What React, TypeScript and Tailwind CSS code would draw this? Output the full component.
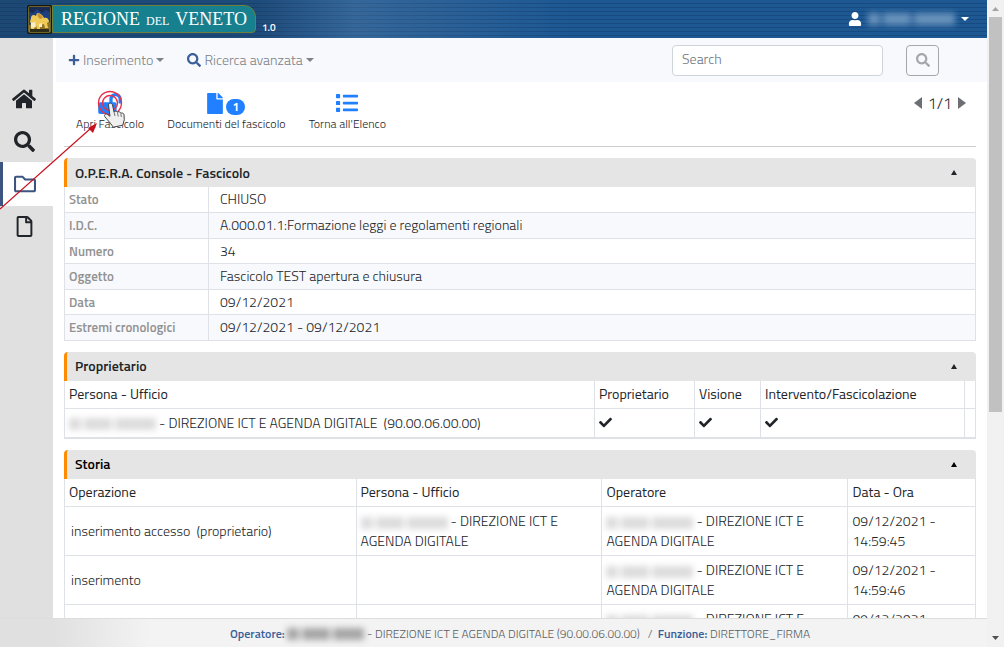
import type { ReactNode } from "react";
import {
  FaCheck, FaFile, FaHome, FaList, FaLockOpen, FaPlus, FaRegFile, FaRegFolder, FaSearch, FaUser,
} from "react-icons/fa";

const CELL = "border border-[#dee2e6] px-1";

function Redacted({ tone, width = "w-[87px]" }: { tone: string; width?: string }) {
  return (
    <span aria-hidden="true" className={`inline-flex h-3 items-center gap-[3px] align-middle blur-[3px] ${width}`}>
      <span className={`h-3 w-3 ${tone}`} />
      <span className={`h-3 w-7 ${tone}`} />
      <span className={`h-3 grow ${tone}`} />
    </span>
  );
}

function Caret() {
  return (
    <svg viewBox="0 0 8 4" className="h-1 w-2" aria-hidden="true">
      <path d="M0 0h8L4 4z" fill="currentColor" />
    </svg>
  );
}

function Crest() {
  return (
    <svg viewBox="0 0 25 29" className="h-[29px] w-[25px]" aria-hidden="true">
      <rect width="25" height="29" rx="2" fill="#15130c" />
      <rect x="1" y="1" width="23" height="27" rx="2" fill="#6d6428" />
      <rect x="2" y="2" width="21" height="25" rx="1" fill="#1d3f80" />
      <path d="M2 2h21v5l-4-2-4 3-5-4-4 4-4-1z" fill="#1a2a50" />
      <path d="M2 20l6-2 8 1 7-2v10H2z" fill="#8f7326" />
      <path d="M4 13c0-3 3-4 5-2l1-3c3 0 6 2 7 5 3-1 5 1 5 4l-2 1 1 5h-3l-1-4-4 1v4h-3l-1-4-2 4H4l1-4-2-3z" fill="#f0ca58" />
      <path d="M10 8c3 1 5 2 6 5l-3 1-2-2z" fill="#c69330" />
      <path d="M4 18l4-1 1 5-5 1zM12 19l3-1v4h-3z" fill="#f8edc4" />
      <path d="M3 24h19v3H3z" fill="#2c2c18" />
    </svg>
  );
}

function Header() {
  return (
    <header className="flex h-[38px] shrink-0 items-center justify-between bg-[linear-gradient(90deg,#1c304866_0%,#1c304855_26%,#6a88a850_36%,#1d569100_58%),repeating-linear-gradient(180deg,#1d5893_0px,#1d5893_3px,#164a80_3px,#164a80_4px)] pr-[18px] pl-[27px]">
      <div className="flex items-center">
        <Crest />
        <div className="flex h-7 items-center gap-1.5 rounded-tr-xl rounded-br-sm border border-[#6f7f3c] bg-[#17808f] px-2 font-['Liberation_Serif',serif] text-lg font-normal text-white">
          <span>REGIONE</span><span className="pt-1 text-xs">DEL</span><span>VENETO</span>
        </div>
        <span className="ml-1.5 self-end text-[10px] leading-3 font-semibold text-white">1.0</span>
      </div>
      <button type="button" aria-label="Utente" className="flex items-center gap-1.5 text-white">
        <FaUser className="size-3.5" />
        <Redacted tone="bg-[#6892bb]" />
        <Caret />
      </button>
    </header>
  );
}

function Sidebar() {
  const item = "flex h-[42px] items-center justify-center pr-[5px]";
  return (
    <nav className="w-[53px] shrink-0 bg-[#e0e0e0] pt-10 text-[#212529]">
      <a href="#home" aria-label="Home" className={item}><FaHome className="size-6" /></a>
      <a href="#cerca" aria-label="Cerca" className={item}><FaSearch className="size-[21px]" /></a>
      <a href="#fascicoli" aria-label="Fascicoli" className="flex h-11 items-center justify-center border-l-[3px] border-[#3b5480] bg-white pr-[7px] text-[#3b5480]"><FaRegFolder className="size-[22px]" /></a>
      <a href="#documenti" aria-label="Documenti" className="flex h-10 items-center justify-center pr-[5px]"><FaRegFile className="size-[21px]" /></a>
    </nav>
  );
}

function Toolbar() {
  return (
    <div className="ml-[3px] flex h-11 shrink-0 items-center bg-[#f8f9fc] pr-12 pl-3 text-sm text-[#7b8288]">
      <button type="button" className="flex items-center gap-[3px]">
        <FaPlus className="size-3 text-[#3b5f99]" />Inserimento <Caret />
      </button>
      <button type="button" className="ml-[23px] flex items-center gap-[3px]">
        <FaSearch className="size-3.5 text-[#3b5f99]" />Ricerca avanzata <Caret />
      </button>
      <input aria-label="Search" placeholder="Search" className="ml-auto h-[31px] w-[211px] rounded border border-[#ced4da] bg-white px-[9px] pb-1 placeholder:text-[#6c757d]" />
      <button type="button" aria-label="Cerca" className="ml-[23px] flex h-[31px] w-[33px] items-center justify-center rounded border border-[#a4a8ac] text-[#a4a8ac]">
        <FaSearch className="size-3.5" />
      </button>
    </div>
  );
}

function Action({ label, children }: { label: string; children: ReactNode }) {
  return (
    <button type="button" className="flex flex-col items-center">
      <span className="flex h-6 items-center text-[#2080ff]">{children}</span>
      <span className="leading-[18px]">{label}</span>
    </button>
  );
}

function Actions() {
  return (
    <div className="mb-[11px] flex h-[65px] items-start justify-between border-b border-[#ccc] pt-[9px] pr-2.5 pl-3">
      <div className="flex gap-[23px] text-xs">
        <Action label="Apri Fascicolo"><FaLockOpen className="h-[21px] w-6" /></Action>
        <Action label="Documenti del fascicolo">
          <FaFile className="h-[21px] w-4" />
          <span className="mt-2 ml-[3px] flex h-4 w-[19px] items-center justify-center rounded-full bg-[#2080ff] text-[11px] font-bold text-white">1</span>
        </Action>
        <Action label="Torna all'Elenco"><FaList className="size-[22px]" /></Action>
      </div>
      <div className="flex h-6 items-center gap-1.5 text-base">
        <button type="button" aria-label="Precedente">
          <svg viewBox="0 0 8 12" className="h-3 w-2"><path d="M8 0v12L0 6z" fill="#6c6f73" /></svg>
        </button>
        1/1
        <button type="button" aria-label="Successivo">
          <svg viewBox="0 0 8 12" className="h-3 w-2"><path d="M0 0v12l8-6z" fill="#6c6f73" /></svg>
        </button>
      </div>
    </div>
  );
}

function Panel({ title, strong = false, children }: { title: string; strong?: boolean; children: ReactNode }) {
  return (
    <section className="mb-[11px]">
      <div className={`flex h-[29px] items-center justify-between rounded-t border-l-[3px] border-[#ff8c00] bg-[#e5e5e5] pr-4 pl-2 font-semibold ${strong ? "text-black" : "text-[#212529]"}`}>
        <h2>{title}</h2>
        <button type="button" aria-label={title} aria-expanded="true" className="flex w-3 justify-center">
          <svg viewBox="0 0 6 5" className="h-[5px] w-1.5"><path d="M3 0l3 5H0z" fill="currentColor" /></svg>
        </button>
      </div>
      {children}
    </section>
  );
}

function Office() {
  return <><Redacted tone="bg-[#dcdcdc]" /> - DIREZIONE ICT E AGENDA DIGITALE</>;
}

const details = [
  ["Stato", "CHIUSO"],
  ["I.D.C.", "A.000.01.1:Formazione leggi e regolamenti regionali"],
  ["Numero", "34"],
  ["Oggetto", "Fascicolo TEST apertura e chiusura"],
  ["Data", "09/12/2021"],
  ["Estremi cronologici", "09/12/2021 - 09/12/2021"],
];

const history = [
  { op: "inserimento accesso \u00a0(proprietario)", person: true, time: "09/12/2021 - 14:59:45" },
  { op: "inserimento", person: false, time: "09/12/2021 - 14:59:46" },
  { op: "inserito documento num.", person: false, time: "09/12/2021 - 14:59:46" },
];

function DetailsTable() {
  return (
    <table className="w-full border-collapse">
      <tbody>
        {details.map(([label, value]) => (
          <tr key={label} className="odd:h-[25px] even:h-[26px] even:bg-[#f8f9fc]">
            <th scope="row" className={`${CELL} w-36 border-t-0 text-left text-[13px] font-semibold text-[#929292]`}>{label}</th>
            <td className={`${CELL} border-t-0 pl-[11px]`}>{value}</td>
          </tr>
        ))}
      </tbody>
    </table>
  );
}

function OwnerTable() {
  return (
    <table className="w-full border-collapse border-b-2 border-[#dee2e6]">
      <thead>
        <tr className="h-7 text-left">
          <th className={`${CELL} border-t-0 font-normal`}>Persona - Ufficio</th>
          <th className={`${CELL} w-[100px] border-t-0 font-normal`}>Proprietario</th>
          <th className={`${CELL} w-[66px] border-t-0 font-normal`}>Visione</th>
          <th className={`${CELL} w-[204px] border-t-0 font-normal`}>Intervento/Fascicolazione</th>
          <th className="w-[11px] border border-t-0 border-[#dee2e6]" />
        </tr>
      </thead>
      <tbody>
        <tr className="h-[29px]">
          <td className={CELL}><Office /> &nbsp;(90.00.06.00.00)</td>
          <td className={CELL}><FaCheck className="size-[13px]" /></td>
          <td className={CELL}><FaCheck className="size-[13px]" /></td>
          <td className={CELL}><FaCheck className="size-[13px]" /></td>
          <td className="border border-[#dee2e6]" />
        </tr>
      </tbody>
    </table>
  );
}

function HistoryTable() {
  return (
    <table className="w-full table-fixed border-collapse">
      <thead>
        <tr className="h-7 text-left">
          <th className={`${CELL} w-[32%] border-t-0 font-normal`}>Operazione</th>
          <th className={`${CELL} w-[27%] border-t-0 font-normal`}>Persona - Ufficio</th>
          <th className={`${CELL} w-[27%] border-t-0 font-normal`}>Operatore</th>
          <th className={`${CELL} w-[14%] border-t-0 font-normal`}>Data - Ora</th>
        </tr>
      </thead>
      <tbody>
        {history.map((h, i) => (
          <tr key={i} className="h-[49px]">
            <td className={`${CELL} pl-1.5`}>{h.op}</td>
            <td className={CELL}>{h.person && <Office />}</td>
            <td className={CELL}><Office /></td>
            <td className={`${CELL} pr-6`}>{h.time}</td>
          </tr>
        ))}
      </tbody>
    </table>
  );
}

function Footer() {
  return (
    <footer className="flex h-[29px] shrink-0 items-center justify-center border-t border-[#ddd] bg-[linear-gradient(90deg,#e0e0e0_53px,#f3f3f3_150px)] pt-0.5 pl-[53px] text-xs whitespace-pre text-[#5a5d60]">
      <b className="font-semibold text-[#3b5f99]">Operatore: </b>
      <Redacted tone="bg-[#a6a6a6]" width="w-[77px]" />
      {" - DIREZIONE ICT E AGENDA DIGITALE (90.00.06.00.00)   /  "}
      <b className="font-semibold text-[#3b5f99]">Funzione: </b>DIRETTORE_FIRMA
    </footer>
  );
}

function Scrollbar() {
  return (
    <div aria-hidden="true" className="flex w-[17px] shrink-0 flex-col items-center bg-[#f1f1f1]">
      <svg viewBox="0 0 17 17" className="size-[17px]"><path d="M5 11l3.500-4 3.500 4z" fill="#a3a3a3" /></svg>
      <div className="h-[61%] w-[13px] bg-[#c1c1c1]" />
      <svg viewBox="0 0 17 17" className="mt-auto size-[17px]"><path d="M5 6l3.500 4 3.500-4z" fill="#505050" /></svg>
    </div>
  );
}

function Pointer() {
  return (
    <svg viewBox="0 0 130 130" className="pointer-events-none absolute top-[84px] left-0 size-[130px]" aria-hidden="true">
      <circle cx="110" cy="19" r="11.500" fill="none" stroke="#e8304a" strokeWidth="1.400" />
      <circle cx="110" cy="19" r="7.500" fill="none" stroke="#e8304a" strokeWidth="1.400" />
      <path d="M0 125L90 45" stroke="#c8101c" strokeWidth="1.200" />
      <path d="M97 39l-4 10-5-5z" fill="#c8101c" />
      <path d="M108.500 21c0-2.500 3.500-2.500 4 0l1.500 7c1-1.300 3-1.300 3.500.3 1-1 3-.6 3.300 1 1.300-.8 3 0 3.200 1.400l.3 5-1.500 5.500-9.500 2-3-4-5.500-6.500c-1.200-1.800 1-3.500 2.700-2.200l2.500 1.800z" fill="#f0f0f0" stroke="#444" strokeWidth="1" />
      <path d="M114 28l1 4M117.500 29l.8 3.500M120.800 30l.6 3" stroke="#555" strokeWidth=".8" />
    </svg>
  );
}

export default function App() {
  return (
    <div className="relative flex h-screen overflow-hidden bg-white font-['Titillium_Web',Roboto,sans-serif] text-sm leading-5 font-light text-[#212529]">
      <div className="flex min-w-0 flex-1 flex-col">
        <Header />
        <div className="flex min-h-0 flex-1">
          <Sidebar />
          <div className="flex min-w-0 flex-1 flex-col">
            <Toolbar />
            <main className="min-h-0 flex-1 overflow-hidden px-[11px]">
              <Actions />
              <Panel title="O.P.E.R.A. Console - Fascicolo"><DetailsTable /></Panel>
              <Panel title="Proprietario"><OwnerTable /></Panel>
              <Panel title="Storia" strong><HistoryTable /></Panel>
            </main>
          </div>
        </div>
        <Footer />
      </div>
      <Scrollbar />
      <Pointer />
    </div>
  );
}
